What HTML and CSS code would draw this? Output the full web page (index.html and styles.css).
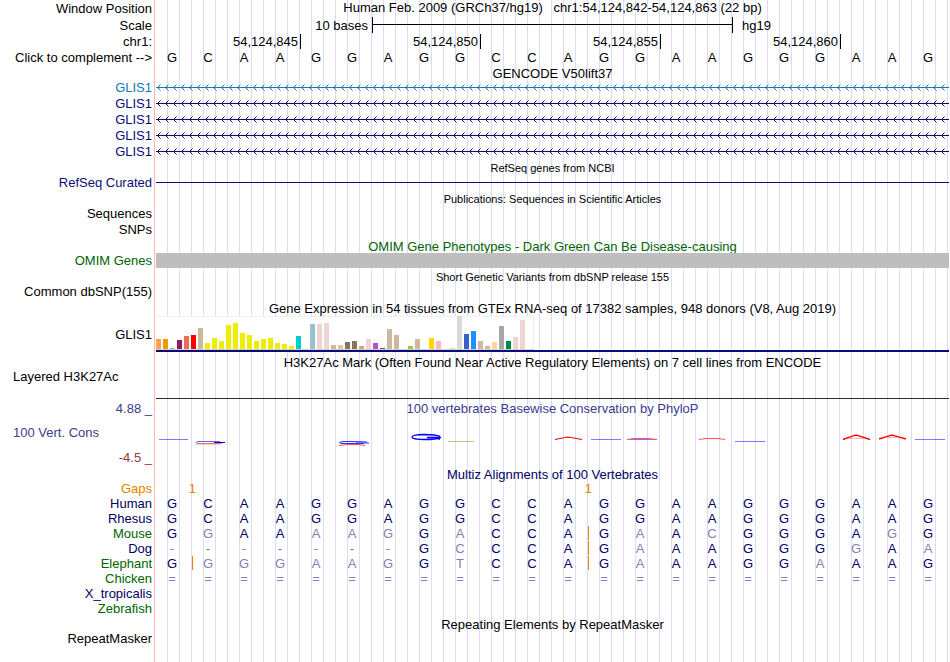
FILE: index.html
```
<!DOCTYPE html>
<html lang="en">
<head>
<meta charset="utf-8">
<title>Genome browser: chr1:54,124,842-54,124,863</title>
<link rel="stylesheet" href="styles.css">
</head>
<body>
<svg class="defs" aria-hidden="true">
  <defs>
    <pattern id="intron-knownGene" width="8" height="16" patternUnits="userSpaceOnUse">
      <path class="shaft known" d="M0 8h8v1H0z"/>
      <path class="barb known" d="M4.5 5.5L1.5 8.5L4.5 11.5"/>
    </pattern>
    <pattern id="intron" width="8" height="16" patternUnits="userSpaceOnUse">
      <path class="shaft" d="M0 8h8v1H0z"/>
      <path class="barb" d="M4.5 5.5L1.5 8.5L4.5 11.5"/>
    </pattern>
  </defs>
</svg>
<main class="browser">
  <header>
    <div class="row position"><div class="label">Window Position</div><h1 class="view title">Human Feb. 2009 (GRCh37/hg19) &nbsp; chr1:54,124,842-54,124,863 (22 bp)</h1></div>
    <div class="row"><div class="label">Scale</div>
      <div class="view scale"><span class="scale-size">10 bases</span><span class="scale-bar"></span><span class="scale-db">hg19</span></div></div>
    <div class="row ruler"><div class="label">chr1:</div>
      <div class="view ticks"><span>54,124,845</span><span>54,124,850</span><span>54,124,855</span><span>54,124,860</span></div></div>
    <div class="row sequence"><div class="label"><button type="button">Click to complement --&gt;</button></div>
      <div class="bases"><span>G</span><span>C</span><span>A</span><span>A</span><span>G</span><span>G</span><span>A</span><span>G</span><span>G</span><span>C</span><span>C</span><span>A</span><span>G</span><span>G</span><span>A</span><span>A</span><span>G</span><span>G</span><span>G</span><span>A</span><span>A</span><span>G</span></div></div>
  </header>

  <section>
    <div class="row heading"><span></span><h2 class="view title">GENCODE V50lift37</h2></div>
    <div class="row"><div class="label known">GLIS1</div><svg class="view intron"><rect width="100%" height="16" fill="url(#intron-knownGene)"/></svg></div>
    <div class="row"><div class="label gene">GLIS1</div><svg class="view intron"><rect width="100%" height="16" fill="url(#intron)"/></svg></div>
    <div class="row"><div class="label gene">GLIS1</div><svg class="view intron"><rect width="100%" height="16" fill="url(#intron)"/></svg></div>
    <div class="row"><div class="label gene">GLIS1</div><svg class="view intron"><rect width="100%" height="16" fill="url(#intron)"/></svg></div>
    <div class="row"><div class="label gene">GLIS1</div><svg class="view intron"><rect width="100%" height="16" fill="url(#intron)"/></svg></div>
  </section>

  <section>
    <div class="row heading"><span></span><h2 class="view title small">RefSeq genes from NCBI</h2></div>
    <div class="row"><div class="label gene">RefSeq Curated</div><div class="view refseq"></div></div>
  </section>

  <section>
    <div class="row heading"><span></span><h2 class="view title small">Publications: Sequences in Scientific Articles</h2></div>
    <div class="row"><div class="label">Sequences</div></div>
    <div class="row"><div class="label">SNPs</div></div>
  </section>

  <section>
    <div class="row heading"><span></span><h2 class="view title green">OMIM Gene Phenotypes - Dark Green Can Be Disease-causing</h2></div>
    <div class="row"><div class="label green">OMIM Genes</div><div class="view omim"></div></div>
  </section>

  <section>
    <div class="row heading"><span></span><h2 class="view title small">Short Genetic Variants from dbSNP release 155</h2></div>
    <div class="row"><div class="label">Common dbSNP(155)</div></div>
  </section>

  <section>
    <div class="row heading"><span></span><h2 class="view title">Gene Expression in 54 tissues from GTEx RNA-seq of 17382 samples, 948 donors (V8, Aug 2019)</h2></div>
    <div class="row gtex"><div class="label">GLIS1</div>
      <div class="view expression">
        <div class="bars">
          <i style="height:10px;background:#ffa54f"></i><i style="height:10px;background:#ee9a00"></i><i style="height:1px;background:#8fbc8f"></i><i style="height:9px;background:#8b1c62"></i><i style="height:13px;background:#ee6a50"></i><i style="height:14px;background:#ff0000"></i><i style="height:21px;background:#cdb79e"></i><i style="height:6px;background:#eeee00"></i><i style="height:11px;background:#eeee00"></i>
          <i style="height:8px;background:#eeee00"></i><i style="height:24px;background:#eeee00"></i><i style="height:26px;background:#eeee00"></i><i style="height:16px;background:#eeee00"></i><i style="height:14px;background:#eeee00"></i><i style="height:8px;background:#eeee00"></i><i style="height:10px;background:#eeee00"></i><i style="height:11px;background:#eeee00"></i><i style="height:6px;background:#eeee00"></i>
          <i style="height:5px;background:#eeee00"></i><i style="height:3px;background:#eeee00"></i><i style="height:13px;background:#00cdcd"></i><i style="height:0"></i><i style="height:25px;background:#9ac0cd"></i><i style="height:25px;background:#eed5d2"></i><i style="height:26px;background:#eed5d2"></i><i style="height:4px;background:#cdb79e"></i><i style="height:4px;background:#eec591"></i>
          <i style="height:7px;background:#8b7355"></i><i style="height:8px;background:#8b7355"></i><i style="height:3px;background:#cdaa7d"></i><i style="height:10px;background:#eed5d2"></i><i style="height:6px;background:#b452cd"></i><i style="height:1px;background:#7a378b"></i><i style="height:20px;background:#cdb79e"></i><i style="height:14px;background:#cdb79e"></i><i style="height:0"></i>
          <i style="height:3px;background:#9acd32"></i><i style="height:10px;background:#cdb79e"></i><i style="height:0"></i><i style="height:11px;background:#ffd700"></i><i style="height:8px;background:#ffb6c1"></i><i style="height:0"></i><i style="height:1px;background:#b4eeb4"></i><i style="height:33px;background:#d9d9d9"></i><i style="height:15px;background:#3a5fcd"></i>
          <i style="height:18px;background:#1e90ff"></i><i style="height:8px;background:#cdb79e"></i><i style="height:3px;background:#cdb79e"></i><i style="height:7px;background:#ffd39b"></i><i style="height:23px;background:#a6a6a6"></i><i style="height:8px;background:#008b45"></i><i style="height:12px;background:#eed5d2"></i><i style="height:29px;background:#eed5d2"></i><i style="height:0"></i>
        </div>
      </div></div>
  </section>

  <section>
    <div class="row heading close"><span></span><h2 class="view title">H3K27Ac Mark (Often Found Near Active Regulatory Elements) on 7 cell lines from ENCODE</h2></div>
    <div class="row h3k27ac close"><div class="label start">Layered H3K27Ac</div><div class="view baseline"></div></div>
  </section>

  <section>
    <div class="row heading"><div class="label cons">4.88 _</div><h2 class="view title cons">100 vertebrates Basewise Conservation by PhyloP</h2></div>
    <div class="row phylop">
      <div class="labels"><div class="label start cons">100 Vert. Cons</div><div class="label negative">-4.5 _</div></div>
      <svg class="view logo" viewBox="0 0 793 52" preserveAspectRatio="none" fill="none" role="img" aria-label="Conservation scores">
        <g stroke="#5a5aff" opacity=".8">
          <path d="M3 25.500H32M435 25.500H465M473 25.500H501M579 27.500H609M759 25.500H789"/>
        </g>
        <g stroke="#2a2aff">
          <path d="M64 27.500H42Q38 28.500 42 29.500H62" opacity=".7"/><path d="M58 28.500H69" stroke="#0000e0"/>
          <path d="M211 28Q205 27.500 188 27.500Q180 28.500 186 29.500H208M200 29H213"/>
        </g>
        <path d="M42 29.500H66" stroke="#ff7070"/><path d="M40 30.500H64" stroke="#d8c070" opacity=".6"/>
        <path d="M183 31.500L192 30.500H202L209 31.500" stroke="#ff5050"/>
        <path d="M284 22.500Q280 20.500 268 20.500Q256 20.800 256 23Q256 25.500 269 25.500Q280 25.500 284 23.500" stroke="#0000ff" stroke-width="1.400"/>
        <path d="M271 23.500H285M283 23V26" stroke="#0000ff" stroke-width="1.400"/>
        <path d="M292 27.500H318" stroke="#c4c470"/>
        <path d="M399 25.500L409 23.500Q412 22.800 415 23.500L426 25.500" stroke="#ff0000" stroke-width="1.200"/>
        <path d="M471 25.500L478 24.500H492L500 25.500M543 25.500L550 24.500H562L569 25.500" stroke="#ff5050"/>
        <path d="M687 25.500L697 21.800Q700 20.600 703 21.800L714 25.500M723 25L733 21.800Q736 20.600 739 21.800L750 25" stroke="#ff0000" stroke-width="1.400"/>
        <path d="M693 24.500H708M729 23.500H743" stroke="#ff9090" stroke-width=".7"/>
      </svg>
    </div>
  </section>

  <section>
    <div class="row heading close"><span></span><h2 class="view title navy">Multiz Alignments of 100 Vertebrates</h2></div>
    <table class="alignment">
      <tr class="gaps"><th scope="row">Gaps</th><td><b>1</b></td><td></td><td></td><td></td><td></td><td></td><td></td><td></td><td></td><td></td><td></td><td><b>1</b></td><td></td><td></td><td></td><td></td><td></td><td></td><td></td><td></td><td></td><td></td></tr>
      <tr><th scope="row">Human</th><td>G</td><td>C</td><td>A</td><td>A</td><td>G</td><td>G</td><td>A</td><td>G</td><td>G</td><td>C</td><td>C</td><td>A</td><td>G</td><td>G</td><td>A</td><td>A</td><td>G</td><td>G</td><td>G</td><td>A</td><td>A</td><td>G</td></tr>
      <tr><th scope="row">Rhesus</th><td>G</td><td>C</td><td>A</td><td>A</td><td>G</td><td>G</td><td>A</td><td>G</td><td>G</td><td>C</td><td>C</td><td>A</td><td>G</td><td>G</td><td>A</td><td>A</td><td>G</td><td>G</td><td>G</td><td>A</td><td>A</td><td>G</td></tr>
      <tr><th scope="row" class="green">Mouse</th><td>G</td><td class="diff">G</td><td>A</td><td>A</td><td class="diff">A</td><td class="diff">A</td><td class="diff">G</td><td>G</td><td class="diff">A</td><td>C</td><td>C</td><td class="insert">A</td><td>G</td><td class="diff">A</td><td>A</td><td class="diff">C</td><td>G</td><td>G</td><td>G</td><td>A</td><td class="diff">G</td><td>G</td></tr>
      <tr><th scope="row">Dog</th><td class="diff">-</td><td class="diff">-</td><td class="diff">-</td><td class="diff">-</td><td class="diff">-</td><td class="diff">-</td><td class="diff">-</td><td>G</td><td class="diff">C</td><td>C</td><td>C</td><td class="insert">A</td><td>G</td><td class="diff">A</td><td>A</td><td>A</td><td>G</td><td>G</td><td>G</td><td class="diff">G</td><td>A</td><td class="diff">A</td></tr>
      <tr><th scope="row" class="green">Elephant</th><td class="insert">G</td><td class="diff">G</td><td class="diff">G</td><td class="diff">G</td><td class="diff">A</td><td class="diff">A</td><td class="diff">G</td><td>G</td><td class="diff">T</td><td>C</td><td>C</td><td class="insert">A</td><td>G</td><td class="diff">A</td><td>A</td><td>A</td><td>G</td><td>G</td><td class="diff">A</td><td>A</td><td>A</td><td>G</td></tr>
      <tr class="missing"><th scope="row" class="green">Chicken</th><td>=</td><td>=</td><td>=</td><td>=</td><td>=</td><td>=</td><td>=</td><td>=</td><td>=</td><td>=</td><td>=</td><td>=</td><td>=</td><td>=</td><td>=</td><td>=</td><td>=</td><td>=</td><td>=</td><td>=</td><td>=</td><td>=</td></tr>
      <tr><th scope="row">X_tropicalis</th><td colspan="22"></td></tr>
      <tr><th scope="row" class="green">Zebrafish</th><td colspan="22"></td></tr>
    </table>
  </section>

  <section>
    <div class="row heading close"><span></span><h2 class="view title">Repeating Elements by RepeatMasker</h2></div>
    <div class="row close"><div class="label">RepeatMasker</div></div>
  </section>
</main>
</body>
</html>
```
FILE: styles.css
```
* { box-sizing: border-box; }

body {
  margin: 0;
  background: #fff;
  color: #000;
  font: 13px/16px "Liberation Sans", Arial, sans-serif;
}

.defs { position: absolute; width: 0; height: 0; }

/* Pink divider, blank label column, then a guide line every 12px */
.browser {
  min-height: 100vh;
  overflow: hidden;
  background:
    linear-gradient(#ffb4b4, #ffb4b4) 154px 0 / 1px 100% no-repeat,
    linear-gradient(#fff, #fff) 0 0 / 156px 100% no-repeat,
    repeating-linear-gradient(to right, transparent 0 11px, #dcdcf8 11px 12px);
}

.row {
  display: grid;
  grid-template-columns: 154px minmax(0, 1fr);
  height: 16px;
  line-height: 18px;
}
.row.close { line-height: 16px; }

.label { padding-right: 2px; text-align: right; white-space: nowrap; }
.label.start { padding-left: 13px; text-align: left; }
.view { margin: 0 1px 0 2px; }

.title {
  font-size: 13px;
  font-weight: normal;
  text-align: center;
  white-space: nowrap;
}
.title.small { font-size: 11px; }

.heading { height: 15px; line-height: 19px; }
.heading.close { line-height: 17px; }

.known { color: #1478b4; }
.gene { color: #0c0c78; }
.navy { color: #000064; }
.green { color: #006400; }
.cons { color: #3c3c8c; }
.negative { color: #8c3c3c; }

/* Header rows */
.position { height: 17px; line-height: 17px; }
.position .title { line-height: 15px; }

.scale { display: grid; grid-template-columns: 216fr 361fr 216fr; }
.scale-size { padding-right: 4px; text-align: right; }
.scale-bar {
  height: 16px;
  border: solid #000;
  border-width: 0 1px;
  background: linear-gradient(#000, #000) 0 7px / 100% 1px no-repeat;
}
.scale-db { padding-left: 9px; }

.ruler { height: 17px; }
.ticks {
  display: grid;
  grid-template-columns: 145fr 180fr 180fr 180fr 108fr;
  padding-top: 1px;
}
.ticks span {
  height: 15px;
  padding-right: 2px;
  border-right: 1px solid #000;
  line-height: 16px;
  text-align: right;
}

.sequence { height: 14px; line-height: 15px; }
.sequence button {
  padding: 0;
  border: 0;
  background: none;
  color: inherit;
  font: inherit;
  cursor: pointer;
}
.bases {
  display: grid;
  grid-template-columns: repeat(22, 1fr);
  margin-right: 4px;
  text-align: center;
}

/* Gene tracks */
.intron { display: block; width: calc(100% - 3px); height: 16px; }
.shaft { fill: #0c0c78; }
.shaft.known { fill: #1478b4; }
.barb { fill: none; stroke: #0c0c78; }
.barb.known { stroke: #1478b4; }

.refseq { height: 9px; border-bottom: 1px solid #0c0c78; }
.omim { height: 15px; margin-top: 1px; background: #bebebe; }

/* GTEx expression */
.gtex { height: 40px; line-height: 42px; }
.expression { height: 38px; padding-top: 2px; border-bottom: 2px solid #0c0c78; }
.bars {
  display: flex;
  align-items: flex-end;
  gap: 2px;
  width: 378px;
  height: 34px;
  border-bottom: 1px solid #d2d2d2;
  background: #fff;
  box-shadow: inset 0 1px #f0f0f0, inset -1px 0 #f0f0f0;
}
.bars i { flex: none; width: 5px; }

.row.h3k27ac { height: 30px; }
.baseline { border-bottom: 1px solid #3c2828; }

/* PhyloP conservation */
.phylop { height: 52px; line-height: 16px; }
.labels {
  display: flex;
  flex-direction: column;
  justify-content: space-between;
  padding-top: 11px;
}
.logo { display: block; width: calc(100% - 3px); height: 52px; }

/* Multiple alignment */
.alignment {
  width: calc(100% - 4px);
  border-collapse: collapse;
  table-layout: fixed;
  color: #000064;
  line-height: 15px;
}
.alignment th {
  width: 154px;
  padding: 0 2px 0 0;
  font-weight: normal;
  text-align: right;
}
.alignment td { position: relative; height: 15px; padding: 0; text-align: center; }
.alignment .green { color: #006400; }
.alignment .diff, .missing td { color: #8282b4; }
.alignment .gaps { color: #e68200; }
.gaps b {
  position: absolute;
  top: 0;
  right: -6px;
  font-weight: normal;
}
.insert::after {
  content: "";
  position: absolute;
  top: 0;
  right: -3px;
  width: 1px;
  height: 14px;
  background: #e68200;
}
```
